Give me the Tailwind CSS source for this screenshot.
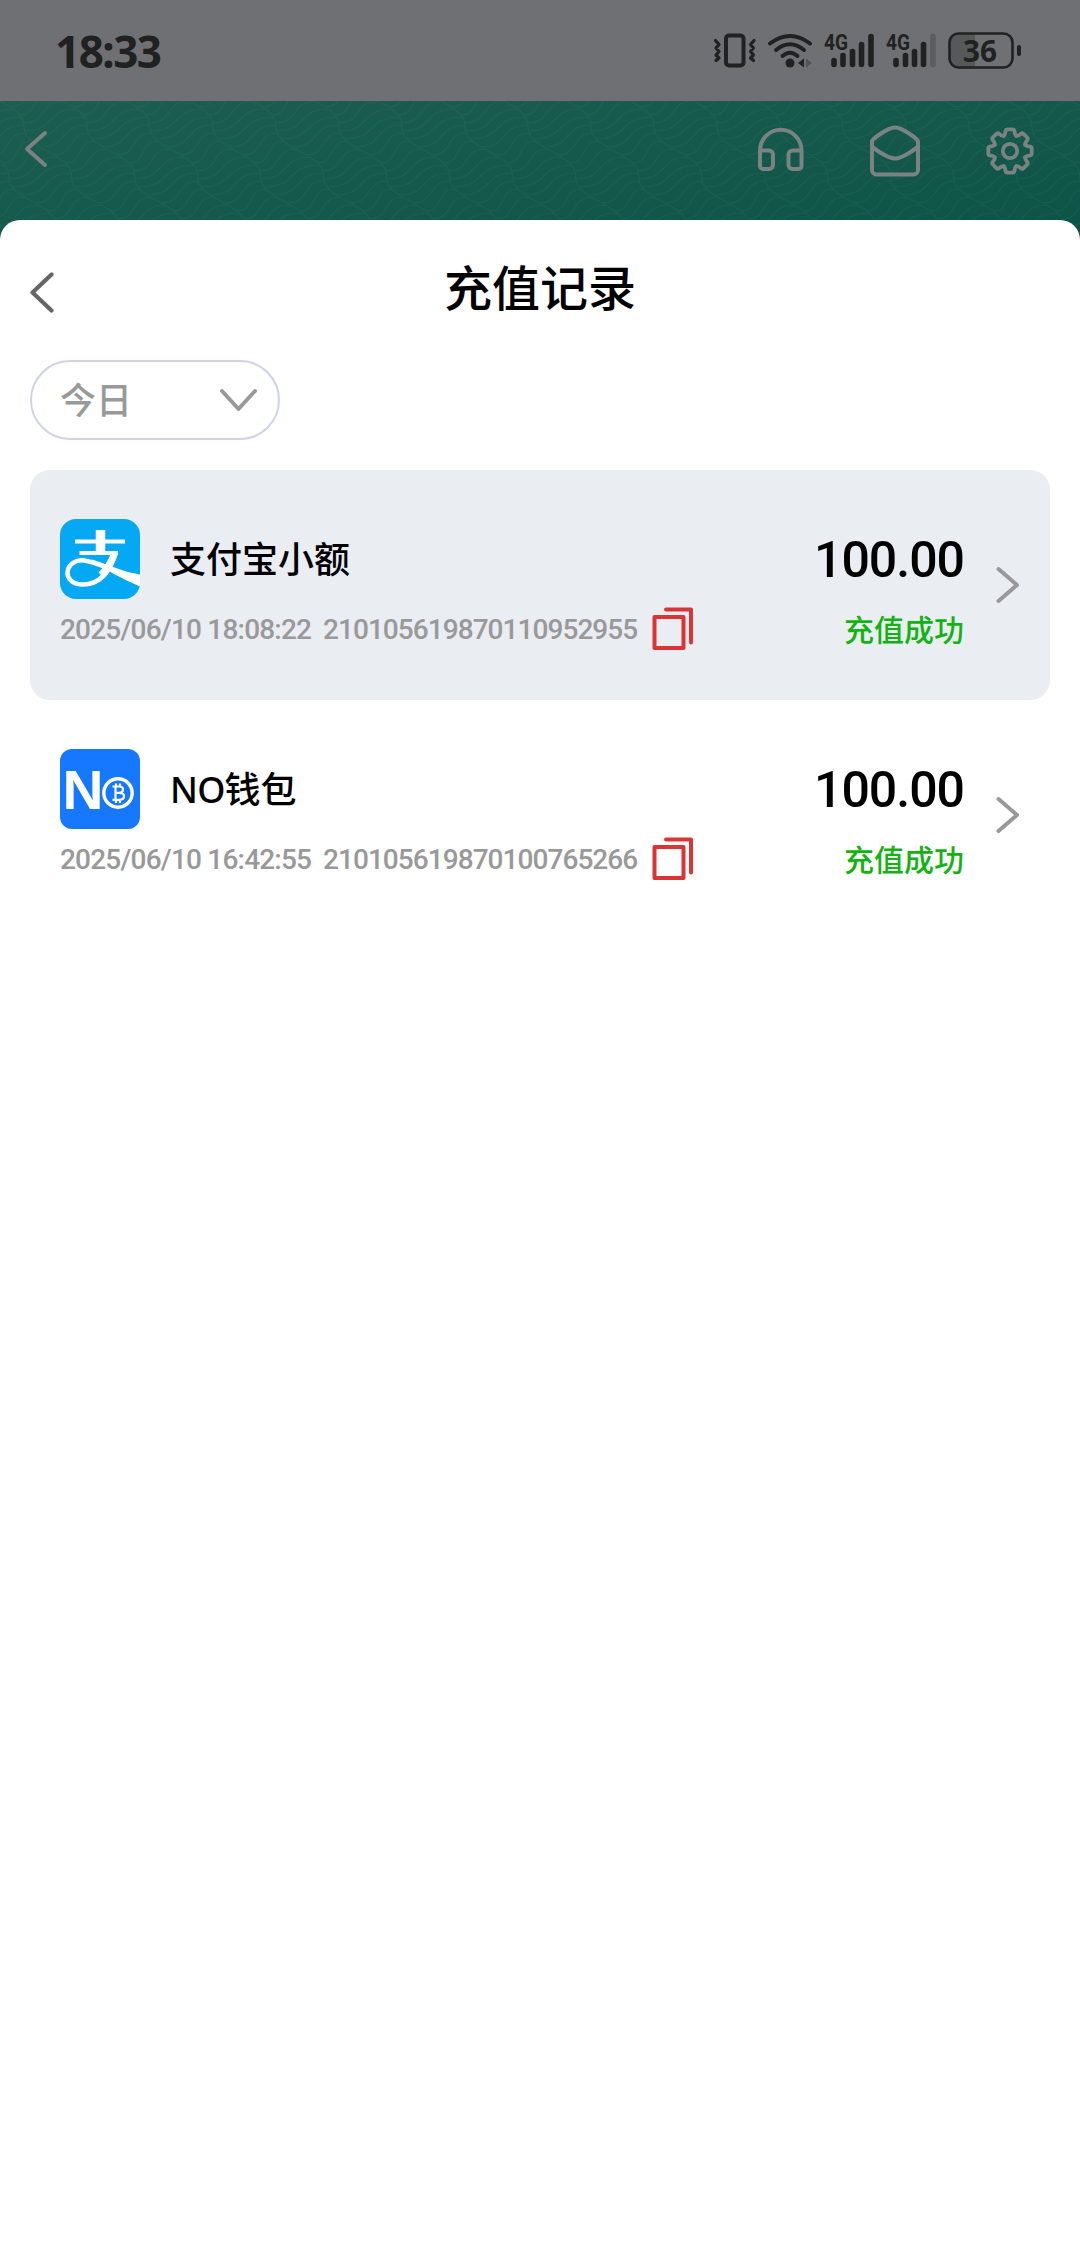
<!DOCTYPE html>
<html lang="zh-CN">
<head>
<meta charset="utf-8">
<meta name="viewport" content="width=device-width">
<title>充值记录</title>
<script src="https://cdn.jsdelivr.net/npm/@tailwindcss/browser@4"></script>
</head>
<body class="w-[1080px] h-[2244px] overflow-hidden flex flex-col bg-[#0f5548] font-['Roboto','Noto_Sans_CJK_SC',sans-serif]">

<!-- status bar -->
<header class="h-[101px] shrink-0 bg-[#6f7073] flex items-start justify-between pl-[55px] pr-[40px] pt-[20px] text-[#202121]">
  <div class="h-[62px] leading-[62px] text-[44px] font-bold font-['Noto_Sans','Roboto',sans-serif] tracking-[-1.500px]">18:33</div>
  <svg class="w-[340px] h-[70px]" viewBox="0 0 340 70" fill="none" stroke="currentColor" stroke-linecap="round" stroke-linejoin="round">
    <!-- vibrate -->
    <rect x="26" y="15.500" width="17.500" height="30" rx="3" stroke-width="4"/>
    <path d="M15.500 20.500l3.500 4-3 3.500 3 3.500-3 3.500 3 3-3 2.500M54 20.500l-3.500 4 3 3.500-3 3.500 3 3.500-3 3 3 2.500" stroke-width="3.200"/>
    <!-- wifi -->
    <g stroke-width="4"><path d="M70 23.500Q90 8.500 110 23.500"/><path d="M76 30Q90 18.500 104 30"/><path d="M82.500 36Q90 29.500 97.500 36"/></g>
    <circle cx="90" cy="43" r="4.500" fill="currentColor" stroke="none"/>
    <path d="M98 43l6-4.500v9z" fill="currentColor" stroke="none"/>
    <path d="M112 43l-6-4.500v9z" fill="#525356" stroke="none"/>
    <!-- signal 1 -->
    <text x="124" y="30" class="text-[22px] font-bold" fill="currentColor" stroke="none" textLength="24" lengthAdjust="spacingAndGlyphs">4G</text>
    <g stroke-width="5.600"><path d="M134 44.500v-4"/><path d="M143 44.500v-9"/><path d="M152.500 44.500v-13"/><path d="M161.500 44.500v-20"/><path d="M171 44.500v-28"/></g>
    <!-- signal 2 -->
    <text x="186" y="30" class="text-[22px] font-bold" fill="currentColor" stroke="none" textLength="24" lengthAdjust="spacingAndGlyphs">4G</text>
    <g stroke-width="5.600"><path d="M196 44.500v-4"/><path d="M205.500 44.500v-9"/><path d="M214.500 44.500v-13"/><path d="M223.500 44.500v-20"/><path d="M233 44.500v-28" stroke="#5b5c5e"/></g>
    <!-- battery -->
    <path d="M275 14h-16q-9 0-9 9v15q0 9 9 9h16z" fill="#57585a" stroke="none"/>
    <rect x="249.500" y="13.500" width="63" height="34" rx="9" stroke-width="2.600"/>
    <text x="280" y="41.500" text-anchor="middle" class="text-[31px] font-bold font-['Noto_Sans',sans-serif]" fill="currentColor" stroke="none" textLength="34" lengthAdjust="spacingAndGlyphs">36</text>
    <path d="M319 27v7" stroke-width="4"/>
  </svg>
</header>

<main class="grid flex-1 min-h-0">
  <!-- page underneath the sheet -->
  <section class="col-start-1 row-start-1 h-[160px] grid bg-linear-to-br from-[#1c5f51] to-[#0b5246] text-[#7a8381] overflow-hidden">
    <svg id="waves" class="col-start-1 row-start-1 w-[1080px] h-[160px]" viewBox="0 0 1080 160" fill="none" stroke="#4a8f7d" stroke-opacity="0.13" stroke-width="1.200"></svg>
    <nav class="col-start-1 row-start-1 flex items-start pl-[24px] pr-[45px] pt-[24px]">
      <svg class="w-[26px] h-[48px]" viewBox="0 0 26 48" fill="none" stroke="currentColor" stroke-width="4" stroke-linecap="round" stroke-linejoin="round"><path d="M21 8L3 24l18 16"/></svg>
      <div class="ml-auto flex gap-[61px] items-start">
        <svg class="w-[54px] h-[54px]" viewBox="0 0 54 54" fill="none" stroke="currentColor" stroke-width="4" stroke-linecap="round" stroke-linejoin="round"><path d="M5 25.500a20.750 20.750 0 0 1 41.500 0V41a3 3 0 0 1-3 3h-6a4 4 0 0 1-4-4V29.500a4 4 0 0 1 4-4h9M5 25.500V41a3 3 0 0 0 3 3h6a4 4 0 0 0 4-4V29.500a4 4 0 0 0-4-4z"/></svg>
        <svg class="w-[54px] h-[54px]" viewBox="0 0 54 54" fill="none" stroke="currentColor" stroke-width="4" stroke-linecap="round" stroke-linejoin="round"><path d="M2 16V45a4.500 4.500 0 0 0 4.500 4.500h37A4.500 4.500 0 0 0 48 45V16Q46 13 39 8.500Q30 2.500 25 2.500T11 8.500Q4 13 2 16zM2 21Q3 23 11 28Q20 33.500 25 33.500T39 28Q47 23 48 21"/></svg>
        <svg class="w-[50px] h-[54px]" viewBox="-25 -27 50 54" fill="none" stroke="currentColor" stroke-width="3.800" stroke-linecap="round" stroke-linejoin="round">
          <g transform="translate(0 -1)">
          <circle r="7.200"/>
          <g id="tooth"><path d="M-6.300-15.200L-5-17l.6-3.200q.3-1.500 1.800-1.500h5.200q1.500 0 1.800 1.500L5-17l1.300 1.800"/></g>
          <use href="#tooth" transform="rotate(45)"/><use href="#tooth" transform="rotate(90)"/><use href="#tooth" transform="rotate(135)"/><use href="#tooth" transform="rotate(180)"/><use href="#tooth" transform="rotate(225)"/><use href="#tooth" transform="rotate(270)"/><use href="#tooth" transform="rotate(315)"/>
          </g>
        </svg>
      </div>
    </nav>
  </section>

  <!-- sheet -->
  <section class="col-start-1 row-start-1 mt-[119px] bg-white rounded-t-[20px] px-[30px] flex flex-col">
    <div class="h-[140px] grid grid-cols-[60px_1fr_60px]">
      <svg class="w-[30px] h-[50px] mt-[48px]" viewBox="0 0 30 50" fill="none" stroke="#666" stroke-width="4.200" stroke-linecap="round" stroke-linejoin="round"><path d="M21.500 6.500L2.500 24.500l19 18"/></svg>
      <h1 class="h-[140px] leading-[140px] text-center text-[48px] font-medium text-black">充值记录</h1>
    </div>
    <button class="w-[250px] h-[80px] rounded-full border-2 border-[#d0d2ea] flex items-center justify-between pl-[28px] pr-[20px] text-[36px] text-[#999] font-medium">
      <span class="pt-[4px]">今日</span>
      <svg class="w-[40px] h-[30px]" viewBox="0 0 40 30" fill="none" stroke="#999" stroke-width="4" stroke-linecap="round" stroke-linejoin="round"><path d="M4 6l16.500 18L37 6"/></svg>
    </button>

    <ul class="mt-[30px]">
      <li class="h-[230px] rounded-[20px] bg-[#eaedf2] flex pl-[30px]">
        <div class="pt-[49px]">
          <div class="flex items-center h-[80px] gap-[30px]">
            <svg class="size-[80px] rounded-[16px]" viewBox="0 0 80 80">
              <rect width="80" height="80" fill="#05a8f2"/>
              <g fill="none" stroke="#fff">
                <path d="M15 22.500H65M19.500 34H58" stroke-width="4"/>
                <path d="M40.500 11V34" stroke-width="9.500"/>
                <path d="M56 33C51 50 41 66 22 65.500C12 65 7 59 7.500 53C8.500 45 16 40.500 24 41.500C33 42.500 44 47.500 54 51" stroke-width="4.500"/>
                <path d="M55 33C52 42 47 50 41 56" stroke-width="7"/>
              </g>
              <path d="M32 40.500Q45 45 56 49Q68 54 80 55.500V67.500Q67 62 54 55Q43 48 32 43z" fill="#fff"/>
            </svg>
            <span class="pt-[4px] text-[36px] font-medium text-black">支付宝小额</span>
          </div>
          <div class="flex items-center h-[60px] text-[28px] text-[#999] font-medium">
            <span class="w-[263px] pt-[2px] tracking-[-0.800px] whitespace-nowrap">2025/06/10 18:08:22</span>
            <span class="w-[327px] pt-[2px] tracking-[-0.950px] whitespace-nowrap">210105619870110952955</span>
            <svg class="w-[44px] h-[46px]" viewBox="0 0 44 46" fill="none" stroke="#db3434" stroke-width="4" stroke-linecap="round" stroke-linejoin="round"><path d="M4.500 11h29v31H4.500zM16 3.500H41V36.500"/></svg>
          </div>
        </div>
        <div class="ml-auto pt-[49px] text-right">
          <div class="h-[80px] leading-[82px] text-[50px] font-medium tracking-[-1px] text-black">100.00</div>
          <div class="h-[60px] leading-[63px] text-[30px] font-medium text-[#12b312]">充值成功</div>
        </div>
        <svg class="self-center w-[86px] h-[44px]" viewBox="0 0 86 44" fill="none" stroke="#999" stroke-width="4" stroke-linecap="round" stroke-linejoin="round"><path d="M34.500 6L53 22 34.500 38"/></svg>
      </li>
      <li class="h-[230px] rounded-[20px] flex pl-[30px]">
        <div class="pt-[49px]">
          <div class="flex items-center h-[80px] gap-[30px]">
            <svg class="size-[80px] rounded-[12px]" viewBox="0 0 80 80">
              <rect width="80" height="80" fill="#1677ff"/>
              <text x="2.500" y="60" class="text-[55px] font-bold font-['Liberation_Sans',sans-serif]" fill="#fff" textLength="41" lengthAdjust="spacingAndGlyphs">N</text>
              <circle cx="58" cy="44" r="14.200" fill="none" stroke="#fff" stroke-width="3.400"/>
              <path d="M52.500 37.500H59Q63 37.500 63 40.500T59 43.800H55.500H59.500Q64 43.800 64 47.200T59.500 50.800H52.500M55.500 37.500V50.800M56 34.500v3M60 34.500v3M56 51v3M60 51v3" fill="none" stroke="#fff" stroke-width="2.200"/>
            </svg>
            <span class="pt-[2px] text-[36px] font-medium text-black"><span class="font-['Noto_Sans',sans-serif] tracking-[-0.800px]">NO</span>钱包</span>
          </div>
          <div class="flex items-center h-[60px] text-[28px] text-[#999] font-medium">
            <span class="w-[263px] pt-[2px] tracking-[-0.800px] whitespace-nowrap">2025/06/10 16:42:55</span>
            <span class="w-[327px] pt-[2px] tracking-[-0.950px] whitespace-nowrap">210105619870100765266</span>
            <svg class="w-[44px] h-[46px]" viewBox="0 0 44 46" fill="none" stroke="#db3434" stroke-width="4" stroke-linecap="round" stroke-linejoin="round"><path d="M4.500 11h29v31H4.500zM16 3.500H41V36.500"/></svg>
          </div>
        </div>
        <div class="ml-auto pt-[49px] text-right">
          <div class="h-[80px] leading-[82px] text-[50px] font-medium tracking-[-1px] text-black">100.00</div>
          <div class="h-[60px] leading-[63px] text-[30px] font-medium text-[#12b312]">充值成功</div>
        </div>
        <svg class="self-center w-[86px] h-[44px]" viewBox="0 0 86 44" fill="none" stroke="#999" stroke-width="4" stroke-linecap="round" stroke-linejoin="round"><path d="M34.500 6L53 22 34.500 38"/></svg>
      </li>
    </ul>
  </section>
</main>

<script>
// Diagonal strands joined by rows of S curves
const strand = (k, y) => k * 63 + 0.95 * y + 7 * Math.sin(y / 8);
let d = '';
for (let k = -4; k < 18; k++) {
  d += `M${strand(k, -10)} -10`;
  for (let y = -6; y <= 170; y += 4) d += `L${strand(k, y)} ${y}`;
  for (let y = -10; y < 200; y += 8) {
    const x1 = strand(k, y), y2 = y - 22, x2 = strand(k + 1, y2);
    const w = (x2 - x1) * 0.6;
    d += `M${x1} ${y}C${x1 + w} ${y} ${x2 - w} ${y2} ${x2} ${y2}`;
  }
}
const p = document.createElementNS('http://www.w3.org/2000/svg', 'path');
p.setAttribute('d', d);
document.getElementById('waves').appendChild(p);
</script>
</body>
</html>
